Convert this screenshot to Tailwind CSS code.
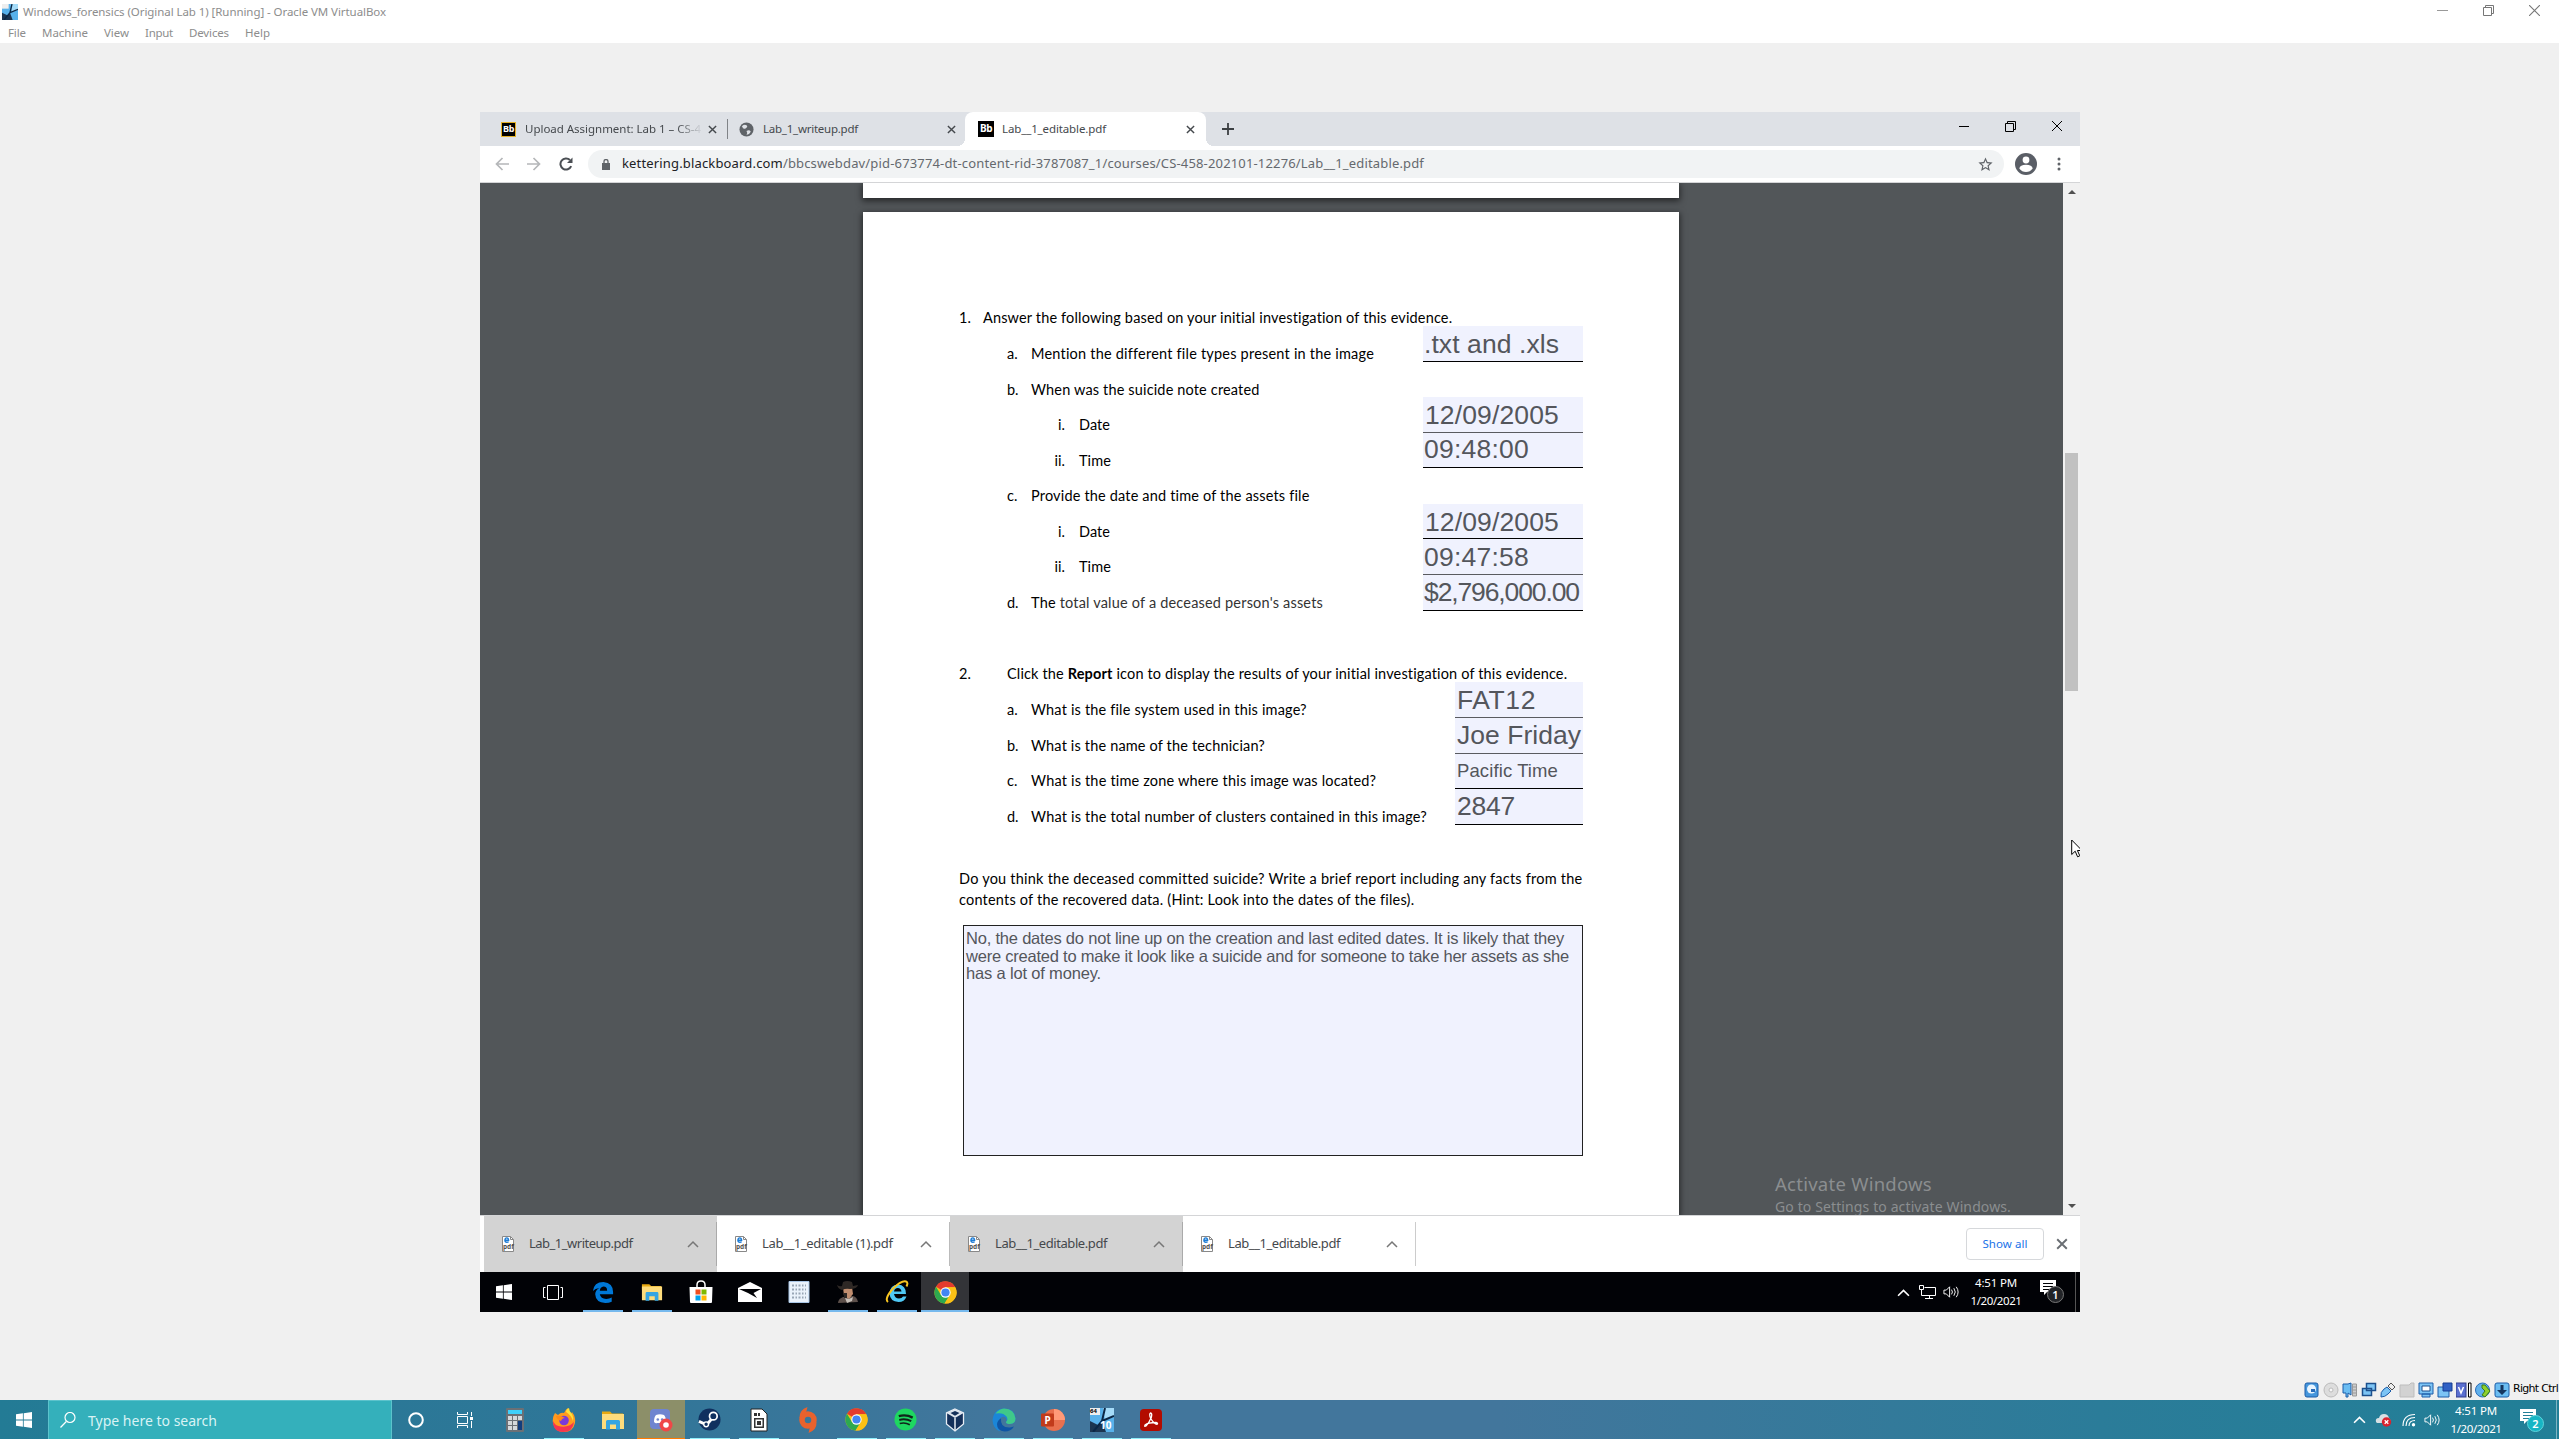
<!DOCTYPE html>
<html lang="en">
<head>
<meta charset="utf-8">
<title>Windows_forensics (Original Lab 1) [Running] - Oracle VM VirtualBox</title>
<script src="https://cdn.jsdelivr.net/npm/@tailwindcss/browser@4"></script>
</head>
<body class="w-[2559px] h-[1439px] overflow-hidden bg-[#f0f0f0] flex flex-col font-['Noto_Sans',sans-serif] text-[11px] whitespace-nowrap relative">
<svg class="hidden">
  <symbol id="win" viewBox="0 0 16 16"><path fill="#fff" d="M0 2.3 6.9 1.3V7.6H0zM7.7 1.2 16 0V7.6H7.7zM0 8.4H6.9V14.7L0 13.7zM7.7 8.4H16V16L7.7 14.8z"/></symbol>
  <symbol id="x" viewBox="0 0 10 10"><path d="M1 1 9 9M9 1 1 9" stroke="currentColor" stroke-width="1.6" fill="none"/></symbol>
  <symbol id="xthin" viewBox="0 0 10 10"><path d="M0 0 10 10M10 0 0 10" stroke="currentColor" stroke-width="1" fill="none"/></symbol>
  <symbol id="restore" viewBox="0 0 11 11"><path d="M.5 2.5h8v8h-8zM2.5 2.5v-2h8v8h-2" stroke="currentColor" fill="none"/></symbol>
  <symbol id="up" viewBox="0 0 12 8"><path d="M1 7 6 2l5 5" stroke="currentColor" stroke-width="1.5" fill="none"/></symbol>
  <symbol id="chrome" viewBox="0 0 24 24"><circle cx="12" cy="12" r="11.5" fill="#fbc116"/><path fill="#e33b2e" d="M12 12 2.1 6A11.5 11.5 0 0 1 22.2 6.6H12z"/><path fill="#2da94f" d="M2.1 6A11.5 11.5 0 0 0 11 23.5L16.6 14.5 12 12 7.3 14.6z"/><path fill="#fbc116" d="M22.2 6.6H12L16.7 14.6 11 23.5A11.5 11.5 0 0 0 22.2 6.6z"/><circle cx="12" cy="12" r="5.4" fill="#fff"/><circle cx="12" cy="12" r="4.3" fill="#4285f4"/></symbol>
  <symbol id="folder" viewBox="0 0 24 24"><path fill="#e8a912" d="M1 3.5h8l2 2h11v4H1z"/><path fill="#fedc7c" d="M1 6h22v15H1z"/><path fill="#35a5e2" d="M5 21.5V13.5q0-1.5 1.500-1.500h11q1.500 0 1.500 1.500v8h-4v-5h-6v5z"/></symbol>
  <symbol id="speaker" viewBox="0 0 18 14"><path d="M1 5h2.500l3.500-3.500v11L3.500 9H1z" stroke="#fff" fill="none"/><path d="M9 4.500q2 2.500 0 5M11.500 3q3 4 0 8M14 1.500q4 5.500 0 11" stroke="#fff" fill="none"/></symbol>
  <symbol id="pdf" viewBox="0 0 12 16"><path d="M.5.500h8l3 3v12H.5z" fill="#fff" stroke="#888"/><path d="M8.500.500v3h3" fill="none" stroke="#888"/><path d="M3 4.200h3.600Q6.500 1.900 4.800 1.900 3 1.900 2.900 4.200 3 6.300 4.800 6.300 6 6.300 6.600 5.600" fill="none" stroke="#1c7cd6" stroke-width="1.400"/></symbol>
  <symbol id="star" viewBox="0 0 24 24"><path fill="#5f6368" d="M22 9.240l-7.190-.62L12 2 9.190 8.630 2 9.240l5.460 4.730L5.820 21 12 17.270 18.180 21l-1.630-7.030L22 9.240zM12 15.400l-3.760 2.270 1-4.280-3.320-2.880 4.380-.38L12 6.100l1.710 4.040 4.380.38-3.320 2.880 1 4.280L12 15.400z"/></symbol>
  <symbol id="box64" viewBox="0 0 24 24"><path fill="#58b1ea" d="M0 0h24v24H0z"/><path fill="#1c3550" d="M0 13 8 17 12 13 16 24H0z"/><path fill="#a5dbf8" d="M13 0h11v9L15 12z"/><path d="M15 0 12 13 24 8M12 13 3 24" stroke="#0b2746" stroke-width="2" fill="none"/><path fill="#eee" d="M0 0h10v7H0z"/></symbol>
</svg>

<!-- VirtualBox title bar and menu -->
<header class="h-[43px] bg-white text-[#8d8d8d] flex justify-between items-start shrink-0">
  <div class="flex flex-col">
    <div class="h-[23px] flex items-center gap-[5px] pl-[2px]">
      <svg class="size-4"><use href="#box64"/></svg>
      <span data-w="363" class="text-[11.5px]">Windows_forensics (Original Lab 1) [Running] - Oracle VM VirtualBox</span>
    </div>
    <nav class="h-5 flex items-center pl-2 gap-4 text-[11.5px]">
      <span data-w="18">File</span><span data-w="46">Machine</span><span data-w="25">View</span><span data-w="28">Input</span><span data-w="40">Devices</span><span data-w="25">Help</span>
    </nav>
  </div>
  <div class="h-[21px] flex items-center gap-[35px] pr-[19px] text-[#777]">
    <span class="w-[11px] h-px bg-[#999]"></span>
    <svg class="size-[11px]"><use href="#restore"/></svg>
    <svg class="size-[11px]"><use href="#xthin"/></svg>
  </div>
</header>

<!-- Guest display -->
<main class="mt-[69px] ml-[480px] w-[1600px] h-[1200px] flex flex-col shrink-0 bg-white relative">
  <div class="h-[34px] bg-[#dee1e6] flex items-center shrink-0 text-[#45494d] text-[11.5px]">
    <div class="w-[248px] h-full flex items-center pl-[21px] pr-[11px] justify-between relative">
      <span class="size-[15px] bg-black border border-[#e3b127] text-white text-[9px] leading-[12px] font-bold text-center tracking-tighter">Bb</span>
      <span class="ml-2 w-[178px] overflow-hidden [mask-image:linear-gradient(to_right,black_85%,transparent)]"><span data-w="176">Upload Assignment: Lab 1 – CS-4</span></span>
      <svg class="size-[9px] ml-1 shrink-0"><use href="#x"/></svg>
      <span class="absolute right-0 top-[7px] w-px h-5 bg-[#808387]"></span>
    </div>
    <div class="w-[237px] h-full flex items-center pl-[11px] pr-[9px]">
      <svg class="size-[15px]" viewBox="0 0 16 16"><circle cx="8" cy="8" r="7.500" fill="#5f6368"/><path d="M3 4.500Q6 2 8 3.500T7 7Q4 8 3.500 5M8 9.500q3-1.500 4.500.5Q11 13.500 8 13.500 9.500 11.500 8 9.500M10 4.500l3 2" fill="#dee1e6"/></svg>
      <span class="ml-[9px] flex-1"><span data-w="95">Lab_1_writeup.pdf</span></span>
      <svg class="size-[9px]"><use href="#x"/></svg>
    </div>
    <div class="w-[241px] h-full bg-white rounded-t-lg flex items-center pl-[13px] pr-[11px] relative">
      <span class="absolute -left-2 bottom-0 size-2 bg-[radial-gradient(circle_at_0_0,transparent_8px,white_8px)]"></span>
      <span class="absolute -right-2 bottom-0 size-2 bg-[radial-gradient(circle_at_100%_0,transparent_8px,white_8px)]"></span>
      <span class="size-4 bg-black text-white text-[10px] leading-[15px] font-bold text-center tracking-tighter">Bb</span>
      <span class="ml-2 flex-1"><span data-w="104">Lab__1_editable.pdf</span></span>
      <svg class="size-[9px]"><use href="#x"/></svg>
    </div>
    <svg class="size-[12px] ml-[16px]" viewBox="0 0 12 12"><path d="M6 0v12M0 6h12" stroke="#3c4043" stroke-width="1.800"/></svg>
    <div class="ml-auto flex gap-[36px] pr-[18px] pb-[6px] text-black items-center">
      <span class="w-[10px] h-px bg-black"></span><svg class="size-[11px]"><use href="#restore"/></svg><svg class="size-[10px]"><use href="#xthin"/></svg>
    </div>
  </div>

  <div class="h-[37px] flex items-center shrink-0 border-b border-[#d4d5d7] pl-[15px] relative">
    <svg class="size-[14px]" viewBox="0 0 14 14"><path d="M14 7H1.500M7.500 1l-6 6 6 6" stroke="#b5b7b9" stroke-width="1.700" fill="none"/></svg>
    <svg class="size-[14px] ml-[18px]" viewBox="0 0 14 14"><path d="M0 7h12.500M6.500 1l6 6-6 6" stroke="#b5b7b9" stroke-width="1.700" fill="none"/></svg>
    <svg class="size-[14px] ml-[18px]" viewBox="0 0 14 14"><path d="M12.200 9.200A5.600 5.600 0 1 1 11 3" stroke="#4b4f54" stroke-width="2" fill="none"/><path d="M13.500.5v5.500H8z" fill="#4b4f54"/></svg>
    <div class="ml-[15px] w-[1416px] h-[28px] rounded-full bg-[#f1f3f4] flex items-center pl-[14px] pr-[10px] text-[#65696e] text-[13px]">
      <svg class="w-[8px] h-[11px]" viewBox="0 0 8 11"><path d="M0 4h8v7H0z" fill="#5f6368"/><path d="M2 4V2.500a2 2 0 0 1 4 0V4" stroke="#5f6368" stroke-width="1.300" fill="none"/></svg>
      <span class="ml-[12px] flex-1"><span data-w="802"><span class="text-[#202124]">kettering.blackboard.com</span>/bbcswebdav/pid-673774-dt-content-rid-3787087_1/courses/CS-458-202101-12276/Lab__1_editable.pdf</span></span>
      <svg class="size-[17px]"><use href="#star"/></svg>
    </div>
    <svg class="size-[22px] ml-[11px]" viewBox="0 0 22 22"><circle cx="11" cy="11" r="11" fill="#5a5e66"/><circle cx="11" cy="7" r="3.400" fill="#fff"/><path d="M4.300 15.500Q5 11.800 11 11.800t6.700 3.700Q15 19 11 19t-6.700-3.500z" fill="#fff"/></svg>
    <svg class="w-[4px] h-[14px] ml-[20px]" viewBox="0 0 4 14"><g fill="#5f6368"><circle cx="2" cy="2" r="1.500"/><circle cx="2" cy="7" r="1.500"/><circle cx="2" cy="12" r="1.500"/></g></svg>
  </div>

  <!-- PDF viewer -->
  <div class="h-[1032px] flex shrink-0 overflow-hidden">
    <div class="flex-1 bg-[#525659] flex flex-col pl-[383px] relative">
      <div class="w-[816px] h-[15px] bg-white shadow-[0_2px_6px_1px_rgba(0,0,0,.55)] shrink-0"></div>
      <div class="mt-[14px] w-[816px] flex-1 bg-white shadow-[0_2px_6px_1px_rgba(0,0,0,.55)] pl-[96px] pr-[96px] pt-[88px] font-['Lato',sans-serif] text-[14.500px] text-black">
        <div class="h-[26px] leading-[36px] flex"><span class="w-6">1.</span><span data-w="470">Answer the following based on your initial investigation of this evidence.</span></div>
        <div class="flex justify-between">
          <div class="pt-[10px] leading-[35.5px] pl-[48px]">
            <div class="flex"><span class="w-6">a.</span><span data-w="342.5">Mention the different file types present in the image</span></div>
            <div class="flex"><span class="w-6">b.</span><span data-w="228.5">When was the suicide note created</span></div>
            <div class="flex"><span class="w-[59px] pr-[1px] text-right">i.</span><span class="ml-[13px]" data-w="31">Date</span></div>
            <div class="flex"><span class="w-[59px] pr-[1px] text-right">ii.</span><span class="ml-[13px]" data-w="32">Time</span></div>
            <div class="flex"><span class="w-6">c.</span><span data-w="278.5">Provide the date and time of the assets file</span></div>
            <div class="flex"><span class="w-[59px] pr-[1px] text-right">i.</span><span class="ml-[13px]" data-w="31">Date</span></div>
            <div class="flex"><span class="w-[59px] pr-[1px] text-right">ii.</span><span class="ml-[13px]" data-w="32">Time</span></div>
            <div class="flex"><span class="w-6">d.</span><span data-w="292">The <span class="text-[#333]">total value of a deceased person's assets</span></span></div>
          </div>
          <div class="w-[160px] font-['Liberation_Sans',sans-serif] text-[26.500px] text-[#54565c] leading-[36px]">
            <div class="h-[36px] bg-[#f0f2fe] border-b border-black pl-[1px]"><span data-w="135">.txt and .xls</span></div>
            <div class="mt-[35px] h-[36px] bg-[#f0f2fe] border-b border-[#5a5b60] pl-[2px]"><span data-w="134">12/09/2005</span></div>
            <div class="h-[35px] bg-[#f0f2fe] border-b border-black pl-[1px] leading-[33px]"><span data-w="105">09:48:00</span></div>
            <div class="mt-[36px] h-[35px] bg-[#f0f2fe] border-b border-black pl-[2px]"><span data-w="134">12/09/2005</span></div>
            <div class="h-[36px] bg-[#f0f2fe] border-b border-[#5a5b60] pl-[1px]"><span data-w="105">09:47:58</span></div>
            <div class="h-[36px] bg-[#f0f2fe] border-b border-black pl-[1px] leading-[34px]"><span data-w="155">$2,796,000.00</span></div>
          </div>
        </div>
        <div class="mt-[36px] h-[26px] leading-[36px] flex"><span class="w-12">2.</span><span data-w="561">Click the <b>Report</b> icon to display the results of your initial investigation of this evidence.</span></div>
        <div class="flex justify-between">
          <div class="pt-[10px] leading-[35.500px] pl-[48px]">
            <div class="flex"><span class="w-6">a.</span><span data-w="275.5">What is the file system used in this image?</span></div>
            <div class="flex"><span class="w-6">b.</span><span data-w="234">What is the name of the technician?</span></div>
            <div class="flex"><span class="w-6">c.</span><span data-w="345.5">What is the time zone where this image was located?</span></div>
            <div class="flex"><span class="w-6">d.</span><span data-w="396">What is the total number of clusters contained in this image?</span></div>
          </div>
          <div class="w-[128px] font-['Liberation_Sans',sans-serif] text-[26.500px] text-[#54565c] leading-[36px]">
            <div class="h-[36px] bg-[#f0f2fe] border-b border-[#5a5b60] pl-[2px]"><span data-w="79">FAT12</span></div>
            <div class="h-[36px] bg-[#f0f2fe] border-b border-[#5a5b60] pl-[2px] leading-[34px]"><span data-w="124">Joe Friday</span></div>
            <div class="h-[35px] bg-[#f0f2fe] border-b border-black pl-[2px] text-[18.500px] leading-[34px]"><span data-w="101">Pacific Time</span></div>
            <div class="h-[36px] bg-[#f0f2fe] border-b border-black pl-[2px] leading-[34px]"><span data-w="58">2847</span></div>
          </div>
        </div>
        <p class="mt-[35px] leading-[20.500px] flex flex-col items-start"><span data-w="623">Do you think the deceased committed suicide? Write a brief report including any facts from the</span><span data-w="455">contents of the recovered data. (Hint: Look into the dates of the files).</span></p>
        <div class="mt-[15px] ml-[4px] w-[620px] h-[231px] bg-[#f0f2fe] border border-[#222] pl-[2px] pt-[4px] font-['Liberation_Sans',sans-serif] text-[16.500px] text-[#54565c] leading-[17.500px] flex flex-col items-start"><span data-w="598">No, the dates do not line up on the creation and last edited dates. It is likely that they</span><span data-w="603">were created to make it look like a suicide and for someone to take her assets as she</span><span data-w="135">has a lot of money.</span></div>
      </div>
      <div class="absolute left-[1295px] bottom-[-3px] text-[#8b8e90] leading-[23px] flex flex-col items-start">
        <span class="text-[18.500px]" data-w="157">Activate Windows</span>
        <span class="text-[14px]" data-w="236">Go to Settings to activate Windows.</span>
      </div>
    </div>
    <div class="w-[17px] bg-[#f1f1f1] flex flex-col items-center py-[7px] shrink-0">
      <svg class="w-[8px] h-[4px]" viewBox="0 0 8 4"><path d="M0 4 4 0l4 4z" fill="#505050"/></svg>
      <div class="mt-[259px] w-[13px] h-[238px] bg-[#c1c1c1]"></div>
      <svg class="w-[8px] h-[4px] mt-auto" viewBox="0 0 8 4"><path d="M0 0h8L4 4z" fill="#505050"/></svg>
    </div>
  </div>

  <!-- Downloads shelf -->
  <div class="h-[57px] border-t border-[#d4d5d7] flex items-center pl-[4px] shrink-0 text-[13px] text-[#45484c]">
    <div class="w-[233px] h-full bg-[#d3d3d3] flex items-center pl-[18px] pr-[18px] relative"><svg class="w-3 h-4"><use href="#pdf"/></svg><span class="absolute left-[19px] top-[27px] text-[6.500px] leading-[8px] font-bold text-[#555]">pdf</span><span class="ml-[15px] flex-1"><span data-w="103.5">Lab_1_writeup.pdf</span></span><svg class="w-3 h-2 text-[#777]"><use href="#up"/></svg><i class="absolute right-0 top-[6px] w-px h-11 bg-[#aaa]"></i></div>
    <div class="w-[233px] h-full flex items-center pl-[18px] pr-[18px] relative"><svg class="w-3 h-4"><use href="#pdf"/></svg><span class="absolute left-[19px] top-[27px] text-[6.500px] leading-[8px] font-bold text-[#555]">pdf</span><span class="ml-[15px] flex-1"><span data-w="130.5">Lab__1_editable (1).pdf</span></span><svg class="w-3 h-2 text-[#777]"><use href="#up"/></svg><i class="absolute right-0 top-[6px] w-px h-11 bg-[#bbb]"></i></div>
    <div class="w-[233px] h-full bg-[#d3d3d3] flex items-center pl-[18px] pr-[18px] relative"><svg class="w-3 h-4"><use href="#pdf"/></svg><span class="absolute left-[19px] top-[27px] text-[6.500px] leading-[8px] font-bold text-[#555]">pdf</span><span class="ml-[15px] flex-1"><span data-w="112">Lab__1_editable.pdf</span></span><svg class="w-3 h-2 text-[#777]"><use href="#up"/></svg><i class="absolute right-0 top-[6px] w-px h-11 bg-[#aaa]"></i></div>
    <div class="w-[233px] h-full flex items-center pl-[18px] pr-[18px] relative"><svg class="w-3 h-4"><use href="#pdf"/></svg><span class="absolute left-[19px] top-[27px] text-[6.500px] leading-[8px] font-bold text-[#555]">pdf</span><span class="ml-[15px] flex-1"><span data-w="112">Lab__1_editable.pdf</span></span><svg class="w-3 h-2 text-[#777]"><use href="#up"/></svg><i class="absolute right-0 top-[6px] w-px h-11 bg-[#ccc]"></i></div>
    <span class="ml-auto w-[78px] h-8 border border-[#d6d8db] rounded text-[#1a73e8] text-[11.500px] leading-[30px] text-center"><span data-w="45">Show all</span></span>
    <svg class="size-[12px] ml-[12px] mr-[12px] text-[#6a6e73]"><use href="#x"/></svg>
  </div>

  <!-- Guest taskbar -->
  <div class="h-10 bg-[#010206] flex shrink-0 pr-[4px]">
    <div class="w-12 h-full flex items-center justify-center"><svg class="size-4"><use href="#win"/></svg></div>
    <div class="w-[50px] h-full flex items-center justify-center"><svg class="w-5 h-[15px]" viewBox="0 0 20 15"><path d="M4.500.500h11v14h-11zM2.500 2.500h-2v10h2M17.500 2.500h2v10h-2" fill="none" stroke="#fff"/></svg></div>
    <div class="w-[49px] h-full flex items-center justify-center relative"><svg class="size-[22px]" viewBox="0 0 24 24"><path fill="#0078d7" d="M1 11Q2 1 12.500 1 23 2 23 12v2.500H8.500q1 5 7 5 3.500 0 6-1.500v4.500q-3 1.500-7 1.500Q4 23.500 3.500 14.500 3.500 10 8 7.500 3.500 8 1 11zM8.500 10.500h8Q16.500 6 12.500 6 9 6.500 8.500 10.500z"/></svg><i class="absolute bottom-0 w-10 h-[2px] bg-[#76b9ed]"></i></div>
    <div class="w-[49px] h-full flex items-center justify-center relative"><svg class="size-[22px]"><use href="#folder"/></svg><i class="absolute bottom-0 w-10 h-[2px] bg-[#76b9ed]"></i></div>
    <div class="w-[49px] h-full flex items-center justify-center"><svg class="size-6" viewBox="0 0 24 24"><path d="M8 7V5q0-4 4-4t4 4v2" fill="none" stroke="#fff" stroke-width="1.500"/><path fill="#fff" d="M.5 7h23l-.5 15q0 1-1 1H2q-1 0-1-1z"/><path fill="#f04e1f" d="M6.500 9.500h5v5h-5z"/><path fill="#7eb900" d="M12.500 9.500h5v5h-5z"/><path fill="#00a3ee" d="M6.500 15.500h5v5h-5z"/><path fill="#feb800" d="M12.500 15.500h5v5h-5z"/></svg></div>
    <div class="w-[49px] h-full flex items-center justify-center"><svg class="w-6 h-5" viewBox="0 0 24 20"><path fill="#fff" d="M0 6 12 0l12 6v14H0z"/><path fill="#010206" d="M1 7h22l-7.500 4 3.500 5L10 11z"/></svg></div>
    <div class="w-[49px] h-full flex items-center justify-center"><svg class="size-[22px]" viewBox="0 0 22 22"><path fill="#eaf2fb" stroke="#a9c6e6" d="M1 .5h20v21H1z"/><path d="M4 4.500h14M4 8.500h14M4 12.500h14M4 16.500h14" stroke="#98a5b5" stroke-width="2" stroke-dasharray="2 1.500 1.500 1.500"/></svg></div>
    <div class="w-[49px] h-full flex items-center justify-center relative"><svg class="size-[22px]" viewBox="0 0 22 22"><path fill="#5d504b" d="M1 22q0-4 5-6l10-1q4 1 5 6z"/><path fill="#c08d6f" d="M6 6h9l1 7-4 5-5-3z"/><path fill="#2e2825" d="M0 4q3 2 5 1l1-4q4-2 9 0l1 4 5-1q-1 4-8 4-4-1-8 1-4-1-5-5zM7 12h3v5H7z"/><path fill="#c7c0ba" d="M8 17l4 1 4-2-1 4-5 2z"/></svg><i class="absolute bottom-0 w-10 h-[2px] bg-[#76b9ed]"></i></div>
    <div class="w-[49px] h-full flex items-center justify-center relative"><svg class="size-6" viewBox="0 0 24 24"><path d="M21 14H9q1 4.500 5 4.500 3 0 4-2h3.500q-2 5.500-8 5.500Q5 21.500 4.500 13.500q.5-8.500 8.500-9 8 .5 8 9.500z" fill="#4fc8f5"/><path d="M9 11.500h7.500Q16 8 12.800 8T9 11.500z" fill="#010206"/><path d="M3 22Q-1 19 8 8.500 17 0 21 1.500q2.500 1 .5 5" fill="none" stroke="#f8c521" stroke-width="2"/></svg><i class="absolute bottom-0 w-10 h-[2px] bg-[#76b9ed]"></i></div>
    <div class="w-12 h-full flex items-center justify-center relative bg-[#333438]"><svg class="size-[23px]"><use href="#chrome"/></svg><i class="absolute bottom-0 w-12 h-[2px] bg-[#76b9ed]"></i></div>
    <div class="ml-auto flex items-center text-white">
      <svg class="w-[13px] h-[9px]"><use href="#up"/></svg>
      <svg class="ml-[9px] w-[17px] h-[14px]" viewBox="0 0 17 14"><path d="M5.500 2.500h11v8H5M10.500 10.500v3M6 13.500h8M.5.500h4v4h-4zM2.500 4.500v6H6" stroke="#fff" fill="none"/></svg>
      <svg class="ml-[7px] w-[17px] h-[14px]"><use href="#speaker"/></svg>
      <div class="ml-[10px] w-[52px] flex flex-col items-center leading-[18px] text-[11.500px]"><span data-w="42">4:51 PM</span><span data-w="51">1/20/2021</span></div>
      <div class="ml-[18px] relative w-[24px] h-[24px]"><svg class="w-4 h-4" viewBox="0 0 16 16"><path fill="#fff" d="M0 0h16v12H7l-3 3v-3H0z"/><path d="M3 3.500h10M3 6.500h10M3 9.500h6" stroke="#010206"/></svg><span class="absolute left-[7px] top-[6px] size-[17px] rounded-full bg-[#222428] border border-[#777] text-white text-[11px] font-semibold leading-[15px] text-center">1</span></div>
      <i class="ml-[11px] w-px h-10 bg-[#555]"></i>
    </div>
  </div>
</main>

<!-- VirtualBox status bar -->
<div class="mt-auto h-[21px] flex items-center justify-end gap-[3px] pr-px text-black text-[11px] font-['DejaVu_Sans',sans-serif]">
  <svg class="size-4" viewBox="0 0 16 16"><rect x="1" y="1" width="13" height="14" rx="2" fill="#4596dc" stroke="#1c5da8"/><circle cx="7.500" cy="7" r="4.500" fill="#e9f5ff"/><path d="M7 7h4v3H7z" fill="#2a6cb8"/></svg>
  <svg class="size-4" viewBox="0 0 16 16"><circle cx="8" cy="8" r="7" fill="#ddd" stroke="#bbb"/><circle cx="8" cy="8" r="2" fill="#f8f8f8" stroke="#bbb"/></svg>
  <svg class="size-4" viewBox="0 0 16 16"><path d="M1 2h5l3-1v12l-3-2v4H4v-4H1z" fill="#6bbdf2" stroke="#1c5da8"/><path d="M10.500 2h4v12h-4zM10.500 5h4M10.500 8h4M10.500 11h4" fill="#ccc" stroke="#999"/></svg>
  <svg class="size-4" viewBox="0 0 16 16"><path d="M5.500 1.500h9v7h-9zM1.500 6.500h9v7h-9z" fill="#7cc4f5" stroke="#1c4f8c" stroke-width="1.500"/></svg>
  <svg class="size-4" viewBox="0 0 16 16"><path d="M1 15q-1-5 3-8l3-2 4 4-3 3q-3 3-7 3z" fill="#7cc4f5" stroke="#1c5da8"/><path d="M8 4l3-3 4 4-3 3z" fill="#eee" stroke="#555"/></svg>
  <svg class="size-4" viewBox="0 0 16 16"><path d="M1 3h9l2-2h3v14H1z" fill="#d2d2d2" stroke="#bdbdbd"/></svg>
  <svg class="size-4" viewBox="0 0 16 16"><path d="M1 1h14v11H1zM4 12h8v3H4z" fill="#7cc4f5" stroke="#1c5da8"/><path d="M4 4h8v5H4z" fill="#fff" stroke="#1c4f8c"/></svg>
  <svg class="size-4" viewBox="0 0 16 16"><path d="M1 5h11v10H1z" fill="#7cc4f5" stroke="#1c5da8"/><path d="M6 1h9v8H6z" fill="#2f60c4" stroke="#173d91"/></svg>
  <svg class="size-4" viewBox="0 0 16 16"><rect x="0" y="1" width="10" height="14" fill="#5a6fd0" stroke="#333f8c"/><path d="M2.500 5 5 11l2.500-6" stroke="#fff" stroke-width="1.500" fill="none"/><path d="M12.500 1h2.500v14h-2.500z" fill="#fff" stroke="#000"/></svg>
  <svg class="size-4" viewBox="0 0 16 16"><circle cx="7.500" cy="8" r="7" fill="#5fb0ec" stroke="#2a6cb8"/><path d="M7 3l3 0 5 6-5 6-3-2 3-4-3-3z" fill="#8fd02e" stroke="#3d7d15"/></svg>
  <svg class="size-4" viewBox="0 0 16 16"><rect x="1" y="1" width="14" height="14" rx="2" fill="#6bbdf2" stroke="#1c5da8"/><path d="M6.500 3h3v5H13L8 13 3 8h3.500z" fill="#15365f"/></svg>
  <span data-w="45">Right Ctrl</span>
</div>

<!-- Host taskbar -->
<footer class="h-[39px] bg-[linear-gradient(90deg,#237b95_0,#2f7698_600px,#42769c_1000px,#42769c_1500px,#2b7c99_2100px,#217f97_2559px)] flex shrink-0 text-white">
  <div class="w-12 h-full flex items-center justify-center"><svg class="size-4"><use href="#win"/></svg></div>
  <div class="w-[344px] h-full bg-[#34b0bb] border border-b-0 border-[#5cc3cc] flex items-center pl-[11px] text-[#d9f3f5] text-[14px]">
    <svg class="size-4" viewBox="0 0 16 16"><circle cx="10" cy="5.500" r="5" fill="none" stroke="#fff" stroke-width="1.200"/><path d="M6.300 9.500.5 15.500" stroke="#fff" stroke-width="1.200"/></svg>
    <span class="ml-3" data-w="129">Type here to search</span>
  </div>
  <div class="w-12 h-full flex items-center justify-center"><svg class="size-4" viewBox="0 0 16 16"><circle cx="8" cy="8" r="6.800" fill="none" stroke="#fff" stroke-width="2"/></svg></div>
  <div class="w-[50px] h-full flex items-center justify-center"><svg class="size-4" viewBox="0 0 16 16"><path d="M.5 4.500h10v7H.5zM.5 0v2.500h10V0M.5 16v-2.500h10V16M14.500 0v4M14.500 9v7" fill="none" stroke="#fff"/><path d="M13 5h3v3h-3z" fill="#fff"/></svg></div>
  <div class="w-[49px] h-full flex items-center justify-center"><svg class="w-[18px] h-6" viewBox="0 0 18 24"><rect width="18" height="24" rx="1" fill="#6b7076"/><path fill="#3fd0fb" d="M2 2h14v4H2z"/><path fill="#d5d8db" d="M2 8h4v4H2zM7 8h4v4H7zM12 8h4v4h-4zM2 13h4v4H2zM7 13h4v4H7zM2 18h4v4H2zM7 18h4v4H7z"/><path fill="#113d7d" d="M12 13h4v9h-4z"/></svg></div>
  <div class="w-[49px] h-full flex items-center justify-center relative"><svg class="size-6" viewBox="0 0 24 24"><path fill="#ff9b1f" d="M3 5l3 2q3-3 6-2 1-3 4-5 0 3 3 6l1-2q4 5 3 11-2 9-11 9T1 15Q0 10 3 5z"/><path fill="#f6364f" d="M1 13q2 5 8 5.500 8 1 13-4.500-1 10-11 10T1 13z"/><path fill="#ffe13a" d="M14 4q0-3 3-4 0 3 3 6 2 4 1 7-2-6-7-9z"/><circle cx="12" cy="12.500" r="4.800" fill="#7b3ad8"/><path fill="#ff8a16" d="M4 8q4-1 9 2-3 0-4 3-4-1-5-5z"/></svg><i class="absolute bottom-0 w-10 h-px bg-[#8ff0fb]"></i></div>
  <div class="w-[49px] h-full flex items-center justify-center"><svg class="size-6"><use href="#folder"/></svg></div>
  <div class="w-[48px] h-full flex items-center justify-center relative bg-[#8c8f69]"><svg class="size-[24px]" viewBox="0 0 24 24"><rect x="1" y="1" width="20" height="20" rx="4" fill="#6f85d0"/><path fill="#fff" d="M5 14q0-5 2-7 4-1.500 8 0 2 2 2 7-2 2-3 1H8q-1 1-3-1z"/><circle cx="8.800" cy="11.500" r="1.300" fill="#6f85d0"/><circle cx="13.200" cy="11.500" r="1.300" fill="#6f85d0"/><circle cx="17" cy="17" r="6.500" fill="#f04747"/><circle cx="17" cy="17" r="2.800" fill="#fff"/></svg><i class="absolute bottom-0 w-full h-px bg-[#ff7a00]"></i></div>
  <div class="w-[49px] h-full flex items-center justify-center relative"><svg class="size-[23px]" viewBox="0 0 24 24"><circle cx="12" cy="12" r="11.500" fill="#10305f"/><path d="M1 14l8 3.500 7-8" stroke="#fff" stroke-width="3" fill="none"/><circle cx="16" cy="8.500" r="4" fill="#10305f" stroke="#fff" stroke-width="1.800"/><circle cx="8.500" cy="17" r="2.500" fill="#10305f" stroke="#fff" stroke-width="1.500"/></svg><i class="absolute bottom-0 w-10 h-px bg-[#8ff0fb]"></i></div>
  <div class="w-[49px] h-full flex items-center justify-center relative"><svg class="w-[18px] h-[24px]" viewBox="0 0 18 24"><path d="M1 1h11l5 5v17H1z" fill="#fff" stroke="#222"/><path d="M4 5h3v3H4zM8 5h2v3H8zM4 10h10v10H4z" fill="#333"/><path d="M5.500 11.500h7v7h-7z" fill="#fff"/><path d="M7 13h4v4H7z" fill="#333"/></svg><i class="absolute bottom-0 w-10 h-px bg-[#8ff0fb]"></i></div>
  <div class="w-[49px] h-full flex items-center justify-center"><svg class="w-[20px] h-[26px]" viewBox="0 0 20 26"><circle cx="10" cy="13" r="6" fill="none" stroke="#e8622d" stroke-width="5.500"/><path fill="#e8622d" d="M1.500 11Q1 3 9.500 0L8 6zM18.500 15q.5 8-8 11l1.500-6z"/></svg></div>
  <div class="w-[49px] h-full flex items-center justify-center relative"><svg class="size-[23px]"><use href="#chrome"/></svg><i class="absolute bottom-0 w-10 h-px bg-[#8ff0fb]"></i></div>
  <div class="w-[49px] h-full flex items-center justify-center relative"><svg class="size-[23px]" viewBox="0 0 24 24"><circle cx="12" cy="12" r="11.500" fill="#1ed760"/><path d="M5 8.500q7.500-2.200 14.500 1.500" stroke="#10251a" stroke-width="2.500" fill="none"/><path d="M5.500 12.500q6.500-1.800 12.500 1.300" stroke="#10251a" stroke-width="2.100" fill="none"/><path d="M6 16.200q5.500-1.500 10.500 1.200" stroke="#10251a" stroke-width="1.700" fill="none"/></svg><i class="absolute bottom-0 w-10 h-px bg-[#8ff0fb]"></i></div>
  <div class="w-[49px] h-full flex items-center justify-center relative"><svg class="w-[20px] h-[24px]" viewBox="0 0 20 24"><path d="M10 1l8.500 4v11L10 23 1.500 16V5z" fill="#14305a" stroke="#e8eef5" stroke-width="1.300"/><path d="M10 1l8.500 4-8.500 5-8.500-5z" fill="#dfe7f0"/><path d="M10 3l4.500 2-4.500 2.800L5.500 5z" fill="#14305a"/><path d="M10 10v13" stroke="#e8eef5" stroke-width="1.500"/></svg><i class="absolute bottom-0 w-10 h-px bg-[#8ff0fb]"></i></div>
  <div class="w-[49px] h-full flex items-center justify-center relative"><svg class="size-6" viewBox="0 0 24 24"><path fill="#1b86d8" d="M.5 12Q2 .5 12.500.500q10.500.5 11 10 0 5-5.500 5.500-4 0-4-2 1.500-2-.5-4.500-2-1.500-5 .5Q4 14 8 23.300 1 21 .5 12z"/><path fill="#3fc98a" d="M12 .5q10.500.500 11.500 10 0 5-5.500 5.500-4 0-4-2 2.500-2.500.5-5.500Q11 4 3.500 5.500 7 1 12 .5z"/><path fill="#0f55a5" d="M9 10.500Q8 20 18 19.500l4-1q-3 5-9.500 5Q5 23 5 16q.5-4 4-5.500z"/></svg><i class="absolute bottom-0 w-10 h-px bg-[#8ff0fb]"></i></div>
  <div class="w-[49px] h-full flex items-center justify-center relative"><svg class="size-6" viewBox="0 0 24 24"><circle cx="13" cy="12" r="11" fill="#e8704e"/><path fill="#ff9a78" d="M13 1a11 11 0 0 1 11 11H13z"/><rect y="5.500" width="13" height="13" rx="1" fill="#c13b1b"/></svg><span class="absolute left-[13px] top-[13px] w-[13px] text-[10px] leading-[14px] font-bold text-center">P</span><i class="absolute bottom-0 w-10 h-px bg-[#8ff0fb]"></i></div>
  <div class="w-[49px] h-full flex items-center justify-center relative"><svg class="size-6"><use href="#box64"/></svg><span class="absolute left-[13px] top-[8px] text-[6px] leading-[7px] font-bold text-black">64</span><span class="absolute left-[23px] top-[19px] text-[10px] leading-[12px] font-bold">10</span><i class="absolute bottom-0 w-10 h-px bg-[#8ff0fb]"></i></div>
  <div class="w-[49px] h-full flex items-center justify-center relative"><svg class="size-[22px]" viewBox="0 0 22 22"><rect width="22" height="22" rx="4" fill="#b30b00"/><path d="M10.500 4q2 0 .8 4.500Q9 14 6 17q-2 1-1-1 3-2.500 11-2.500 2.500.5 1 1.800-3 0-6.500-6.300Q9 5 10.500 4z" fill="none" stroke="#fff" stroke-width="1.300"/></svg><i class="absolute bottom-0 w-10 h-px bg-[#8ff0fb]"></i></div>
  <div class="ml-auto flex items-center pr-[2px]">
    <svg class="w-[13px] h-[9px]"><use href="#up"/></svg>
    <svg class="ml-[9px] w-[17px] h-[14px]" viewBox="0 0 17 14"><path d="M1 9q-1-4 3-4 1-4 5-4t5 4l2 3-3 2H2z" fill="#d7dfe3"/><circle cx="11.500" cy="9" r="4.700" fill="#d8232f"/><path d="M9.700 7.200l3.600 3.600M13.300 7.200l-3.600 3.600" stroke="#fff" stroke-width="1.300"/></svg>
    <svg class="ml-[10px] w-[14px] h-[14px]" viewBox="0 0 14 14"><g fill="none" stroke="#fff" stroke-width="1.100"><path d="M1 13Q1 1.500 13 1.500M4 13q0-8.500 9-8.500M7 13q0-5.500 6-5.500"/></g><circle cx="11.500" cy="11.800" r="1.700" fill="#fff"/></svg>
    <svg class="ml-[8px] w-[17px] h-[14px]"><use href="#speaker"/></svg>
    <div class="ml-[9px] w-[52px] flex flex-col items-center leading-[18px] text-[11.500px]"><span data-w="42">4:51 PM</span><span data-w="51">1/20/2021</span></div>
    <div class="ml-[18px] relative w-[25px] h-[22px]"><svg class="w-4 h-4" viewBox="0 0 16 16"><path fill="#fff" d="M0 0h16v12H7l-3 3v-3H0z"/><path d="M3 3.500h10M3 6.500h10M3 9.500h6" stroke="#217f97"/></svg><span class="absolute left-[7px] top-[6px] size-[17px] rounded-full bg-[#16b5c4] border border-[#5fd3dc] text-white text-[11px] font-semibold leading-[15px] text-center">2</span></div>
    <i class="ml-[11px] w-px h-[39px] bg-[#7fb4c2]"></i>
  </div>
</footer>

<!-- Mouse pointer -->
<svg class="absolute left-[2071px] top-[839px] w-[9px] h-[19px]" viewBox="0 0 9 19"><path d="M.7 1v14.500l3.500-3.300 2.400 5.600 2.200-1-2.400-5.300h4.600z" fill="#fff" stroke="#000"/></svg>

<script>
  // Spread each label's letters so the run has its designed width.
  function fitLabels() {
    document.querySelectorAll('[data-w]').forEach(function (el) {
      el.style.display = 'inline-block';
      el.style.flexShrink = 0;
      el.style.letterSpacing = '0px';
      var natural = el.getBoundingClientRect().width;
      el.style.letterSpacing = (el.dataset.w - natural) / el.textContent.length + 'px';
    });
  }
  fitLabels();
  window.addEventListener('load', function () {
    fitLabels();
    requestAnimationFrame(fitLabels);
    setTimeout(fitLabels, 100);
  });
</script>
</body>
</html>
